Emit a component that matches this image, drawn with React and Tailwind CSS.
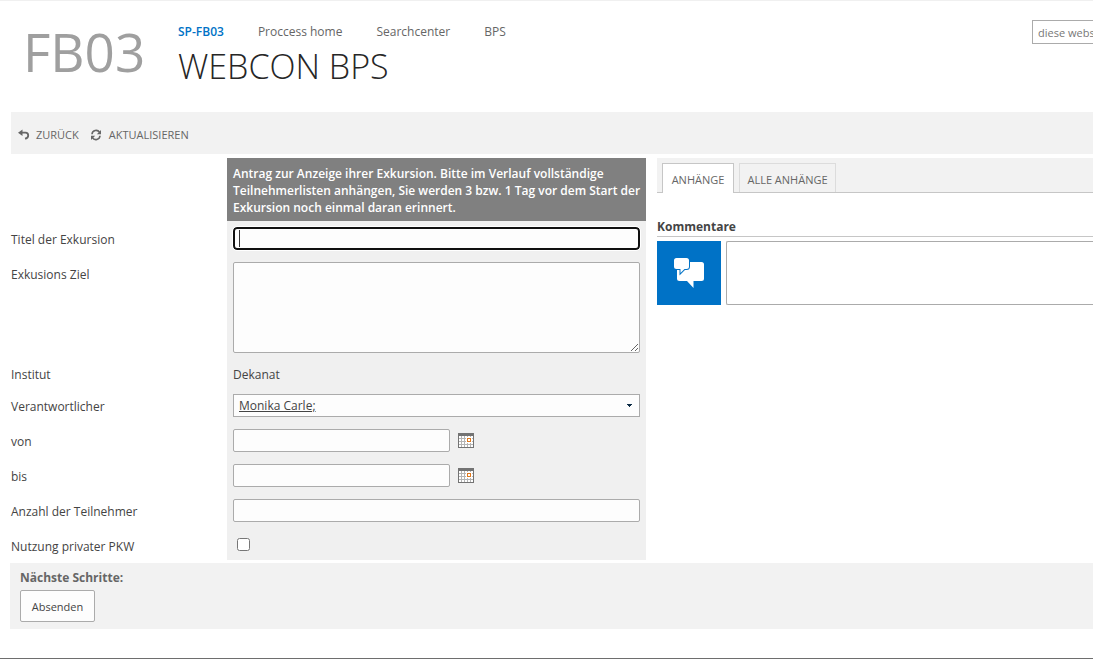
const navLinks = [
  { label: "SP-FB03", active: true },
  { label: "Proccess home" },
  { label: "Searchcenter" },
  { label: "BPS" },
];

const inputClass =
  "block h-[23px] rounded-[2px] border border-[#ababab] bg-[#fdfdfd] px-[5px] text-[12px] text-[#444444] outline-none";

function BackIcon() {
  return (
    <svg width="12" height="12" viewBox="0 0 12 12" fill="none" aria-hidden="true">
      <path d="M4.500 0.500 0 3.700 4.500 7Z" fill="#666666" />
      <path d="M3.500 3.700h4a2.700 2.700 0 0 1 2.700 2.700c0 1.800-0.900 2.900-3.200 3.200" stroke="#666666" strokeWidth="1.8" />
    </svg>
  );
}

function RefreshIcon() {
  return (
    <svg width="12" height="12" viewBox="0 0 12 12" fill="none" aria-hidden="true">
      <path d="M1 5.200A4.100 4.100 0 0 1 8.600 3.400M9 6.800A4.100 4.100 0 0 1 1.400 8.600" stroke="#666666" strokeWidth="1.6" />
      <path d="M10 1v4.200H5.800ZM0 11V6.800h4.200Z" fill="#666666" />
    </svg>
  );
}

function CalendarIcon() {
  return (
    <svg width="16" height="15" viewBox="0 0 16 15" shapeRendering="crispEdges" aria-hidden="true">
      <rect width="16" height="15" fill="#737373" />
      <rect x="1" y="3" width="14" height="11" fill="#ffffff" />
      <path
        d="M3 3h1v11H3zM6 3h1v11H6zM9 3h1v11H9zM12 3h1v11h-1zM1 5h14v1H1zM1 8h14v1H1zM1 11h14v1H1z"
        fill="#b5b5b5"
      />
      <rect x="8" y="4" width="6" height="6" fill="#ffffff" />
      <rect x="9" y="5" width="4" height="4" fill="#e07a1f" />
      <rect x="10" y="6" width="2" height="2" fill="#ffffff" />
    </svg>
  );
}

function CommentIcon() {
  return (
    <svg width="64" height="64" viewBox="0 0 64 64" aria-hidden="true">
      <path
        d="M22 21h22.500a2.500 2.500 0 0 1 2.500 2.500v14a2.500 2.500 0 0 1-2.500 2.500H36.500v7L30 40H22.500a2.500 2.500 0 0 1-2.500-2.500V23a2 2 0 0 1 2-2Z"
        fill="#ffffff"
      />
      <path
        d="M19.500 17H29.500a2.500 2.500 0 0 1 2.500 2.500v6a2.500 2.500 0 0 1-2.500 2.500H27.500L23.500 32V28H19.500a2.500 2.500 0 0 1-2.500-2.500v-6a2.500 2.500 0 0 1 2.500-2.500Z"
        fill="#ffffff"
        stroke="#0072c6"
        strokeWidth="2"
        paintOrder="stroke"
      />
    </svg>
  );
}

function Row({ label, htmlFor, children }) {
  return (
    <div className="flex">
      <div className="w-[216px] shrink-0 pt-[10px] leading-[17px]">
        <label htmlFor={htmlFor}>{label}</label>
      </div>
      <div className="flex-1 bg-[#f0f0f0] p-[6px]">{children}</div>
    </div>
  );
}

function DateField({ id, label }) {
  return (
    <Row label={label} htmlFor={id}>
      <div className="flex items-center gap-2">
        <input id={id} type="text" className={`${inputClass} w-[217px]`} />
        <button type="button" aria-label="Kalender">
          <CalendarIcon />
        </button>
      </div>
    </Row>
  );
}

function Header() {
  return (
    <header className="flex h-[111px] items-start">
      <div className="w-[178px] shrink-0 pl-[23px] pt-[15px] text-[53px] leading-[72px] text-[#9f9f9f]">
        FB03
      </div>
      <div className="flex-1 pt-[21px]">
        <nav className="flex gap-[34px] leading-[20px]">
          {navLinks.map((link) => (
            <a
              key={link.label}
              href="#"
              className={link.active ? "font-semibold text-[#0072c6]" : "text-[#666666]"}
            >
              {link.label}
            </a>
          ))}
        </nav>
        <h1 className="text-[34px] font-light leading-[48px] text-[#262626]">WEBCON BPS</h1>
      </div>
      <input
        type="text"
        aria-label="Suche"
        placeholder="diese website durchsuchen"
        className="mt-[19px] h-[24px] w-[61px] shrink-0 border border-r-0 border-[#ababab] pl-[5px] text-[11px] outline-none placeholder:text-[#777777]"
      />
    </header>
  );
}

function Toolbar() {
  return (
    <div className="ml-[11px] flex h-[42px] items-center gap-[12px] bg-[#f2f2f2] pl-[7px] pt-[4px] text-[11px] text-[#666666]">
      <button type="button" className="flex items-center gap-[6px]">
        <BackIcon />
        ZURÜCK
      </button>
      <button type="button" className="flex items-center gap-[6px]">
        <RefreshIcon />
        AKTUALISIEREN
      </button>
    </div>
  );
}

function RequestForm() {
  return (
    <section className="w-[635px] shrink-0">
      <p className="ml-[216px] bg-[#808080] pb-[5px] pl-[6px] pt-[7px] font-semibold leading-[17px] text-white">
        Antrag zur Anzeige ihrer Exkursion. Bitte im Verlauf vollständige
        <br />
        Teilnehmerlisten anhängen, Sie werden 3 bzw. 1 Tag vor dem Start der
        <br />
        Exkursion noch einmal daran erinnert.
      </p>
      <Row label="Titel der Exkursion" htmlFor="titel">
        <div className="relative">
          <input
            id="titel"
            type="text"
            className="block h-[23px] w-full rounded-[4px] border-2 border-[#101010] bg-[#fdfdfd] px-[4px] outline-1 outline-white"
          />
          <span className="absolute left-[6px] top-[3px] h-[17px] w-px bg-[#333333]" />
        </div>
      </Row>
      <Row label="Exkusions Ziel" htmlFor="ziel">
        <textarea
          id="ziel"
          className="block h-[91px] w-full rounded-[2px] border border-[#ababab] bg-[#fdfdfd] outline-none"
        />
      </Row>
      <div className="flex leading-[17px]">
        <div className="w-[216px] shrink-0 pb-[5px] pt-[7px]">Institut</div>
        <div className="flex-1 bg-[#f0f0f0] px-[6px] pb-[5px] pt-[7px]">Dekanat</div>
      </div>
      <Row label="Verantwortlicher" htmlFor="verantwortlicher">
        <div className="relative">
          <select
            id="verantwortlicher"
            className="block h-[23px] w-full appearance-none border border-[#ababab] bg-[#fdfdfd] px-[5px] underline outline-none"
          >
            <option>Monika Carle;</option>
          </select>
          <svg
            width="5"
            height="3"
            viewBox="0 0 5 3"
            shapeRendering="crispEdges"
            className="pointer-events-none absolute right-[8px] top-[10px]"
            aria-hidden="true"
          >
            <path d="M0 0h5v1H4v1H3v1H2V2H1V1H0Z" fill="#0b2a44" />
          </svg>
        </div>
      </Row>
      <DateField id="von" label="von" />
      <DateField id="bis" label="bis" />
      <Row label="Anzahl der Teilnehmer" htmlFor="anzahl">
        <input id="anzahl" type="text" className={`${inputClass} w-full`} />
      </Row>
      <Row label="Nutzung privater PKW" htmlFor="pkw">
        <div className="flex h-[20px] items-center pl-1">
          <input id="pkw" type="checkbox" className="h-[13px] w-[13px]" />
        </div>
      </Row>
    </section>
  );
}

function Attachments() {
  return (
    <section className="min-w-0 flex-1">
      <div className="flex h-[35px] items-end gap-[5px] border-b border-[#c6c6c6] bg-[#f2f2f2] pl-[5px] text-[11px] text-[#666666]">
        <button
          type="button"
          className="-mb-px h-[30px] w-[72px] border border-b-0 border-[#c6c6c6] bg-white pt-[4px]"
        >
          ANHÄNGE
        </button>
        <button type="button" className="h-[29px] w-[97px] border border-b-0 border-[#dcdcdc] pt-[5px]">
          ALLE ANHÄNGE
        </button>
      </div>
      <h2 className="mt-[24px] border-b border-[#c6c6c6] font-bold leading-[19px]">
        <label htmlFor="kommentar">Kommentare</label>
      </h2>
      <div className="mt-[4px] flex gap-[5px]">
        <div className="h-[64px] w-[64px] shrink-0 bg-[#0072c6]">
          <CommentIcon />
        </div>
        <textarea
          id="kommentar"
          className="block h-[64px] min-w-0 flex-1 resize-none rounded-l-[2px] border border-r-0 border-[#ababab] bg-white outline-none"
        />
      </div>
    </section>
  );
}

export default function App() {
  return (
    <div className="min-h-screen overflow-hidden border-b border-t border-b-[#6e6e6e] border-t-[#f0f0f0] bg-white font-['Open_Sans',sans-serif] text-[12px] text-[#444444]">
      <Header />
      <Toolbar />
      <main className="ml-[11px] mt-[4px] flex gap-[11px]">
        <RequestForm />
        <Attachments />
      </main>
      <footer className="ml-[10px] mt-[3px] h-[66px] bg-[#f2f2f2] px-[10px] pt-[5px]">
        <p className="font-bold leading-[19px] text-[#666666]">Nächste Schritte:</p>
        <button
          type="button"
          className="mt-[3px] h-[32px] w-[75px] rounded-[2px] border border-[#ababab] bg-[#fdfdfd] pt-[2px] text-[11px]"
        >
          Absenden
        </button>
      </footer>
    </div>
  );
}
